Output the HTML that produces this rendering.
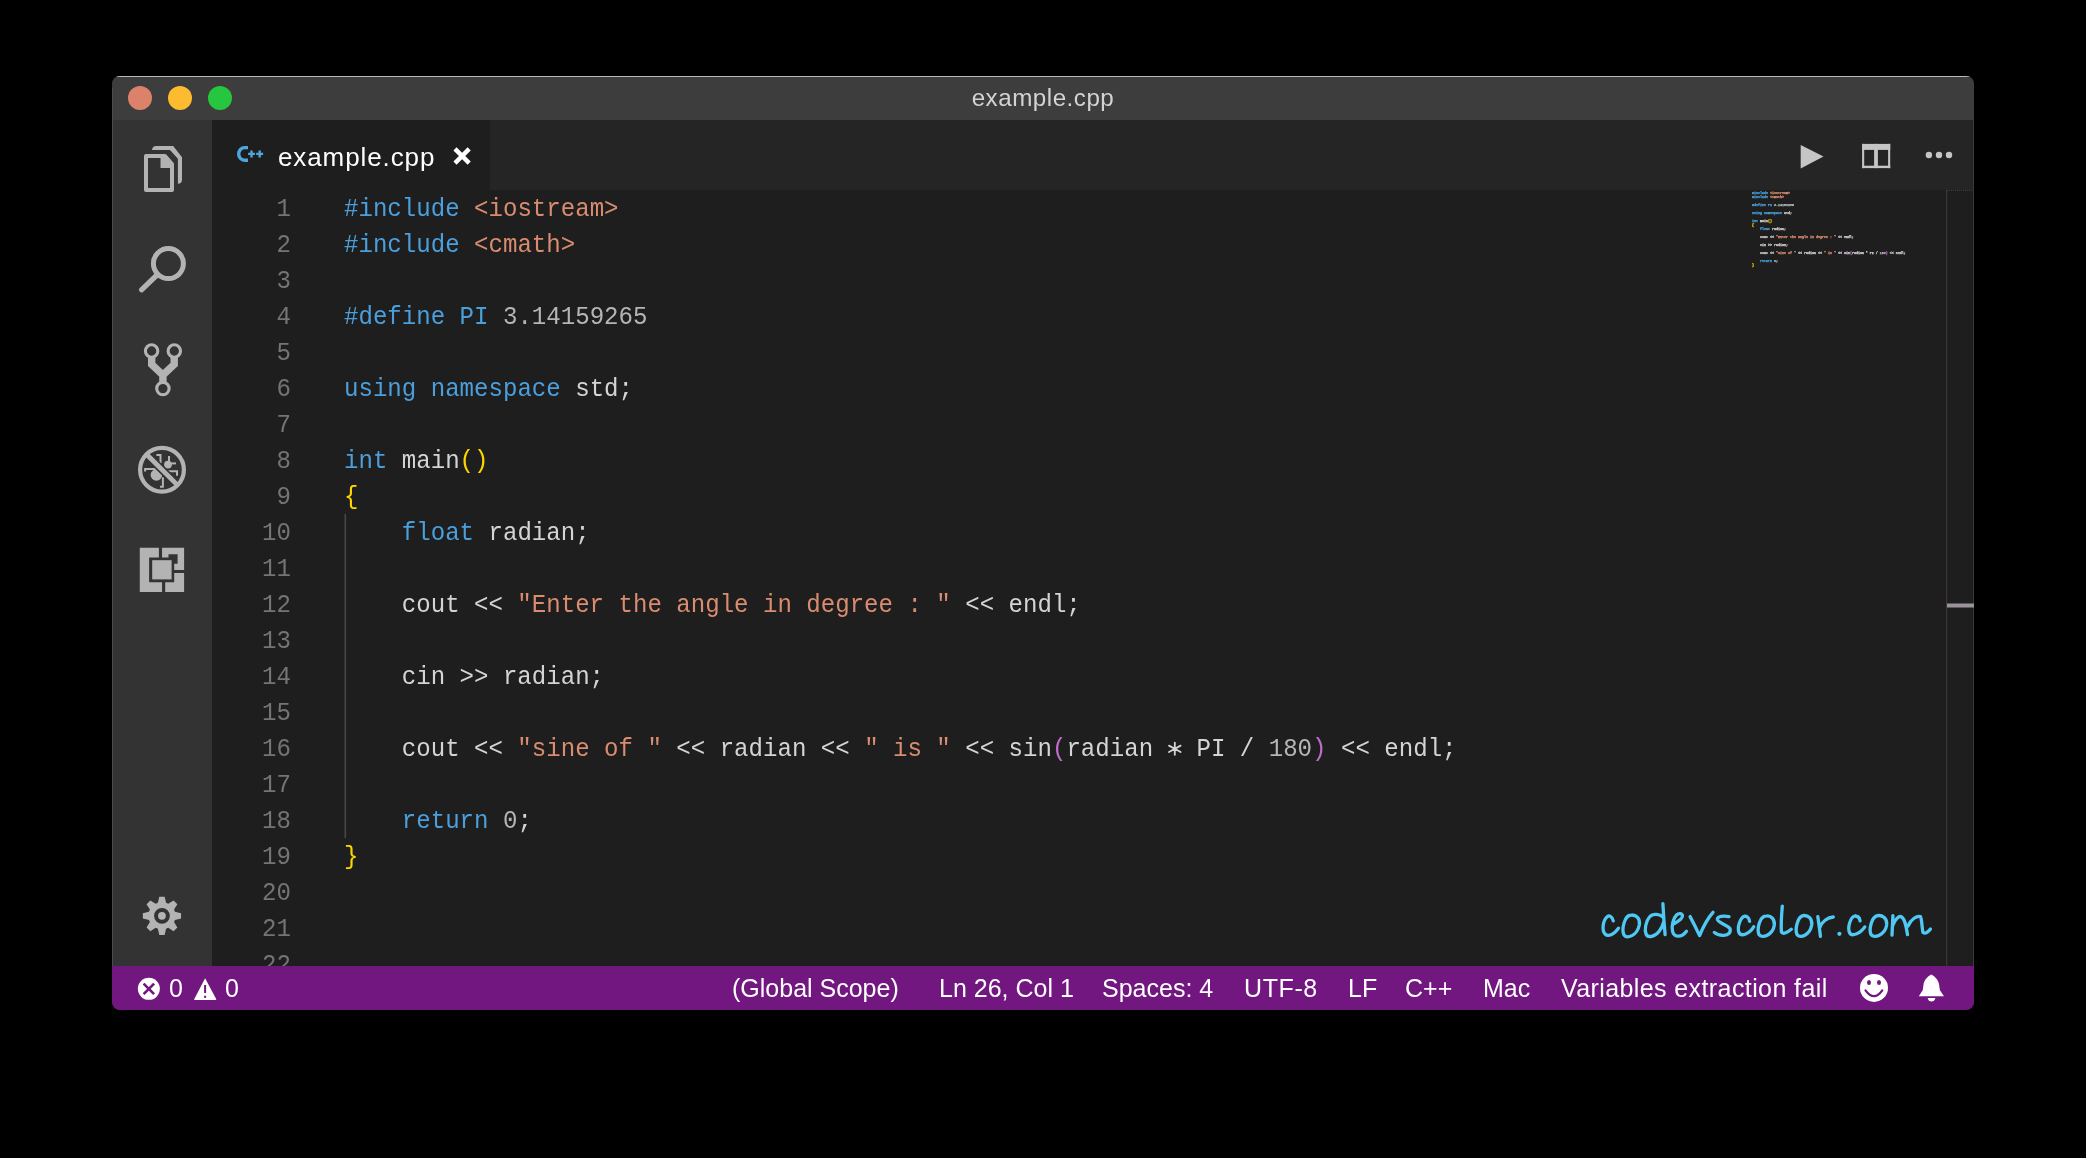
<!DOCTYPE html>
<html><head><meta charset="utf-8"><style>
html,body{margin:0;padding:0;background:#000;width:2086px;height:1158px;overflow:hidden;}
#win{position:absolute;left:112px;top:76px;width:1862px;height:934px;border-radius:8px;overflow:hidden;background:#1e1e1e;}
#title{position:absolute;left:0;top:0;width:1862px;height:44px;background:#3d3d3d;border-top:1px solid #b9b9b9;box-sizing:border-box;}
.tl{position:absolute;top:9.2px;width:24px;height:24px;border-radius:50%;margin-left:-12px;}
#ttext{position:absolute;left:0;width:1862px;top:-0.8px;text-align:center;font-family:"Liberation Sans",sans-serif;font-size:24.2px;letter-spacing:0.5px;color:#d5d2d5;line-height:44px;will-change:transform;}
#act{position:absolute;left:0;top:44px;width:100px;height:846px;background:#333333;}
#tabs{position:absolute;left:100px;top:44px;width:1762px;height:70px;background:#252526;}
#tab{position:absolute;left:0;top:0;width:278px;height:70px;background:#1e1e1e;}
#tabtext{position:absolute;left:66px;top:1.5px;font-family:"Liberation Sans",sans-serif;font-size:26px;letter-spacing:0.9px;color:#ffffff;line-height:70px;will-change:transform;}
#editor{position:absolute;left:100px;top:114px;width:1762px;height:776px;background:#1e1e1e;overflow:hidden;}
.ln{position:absolute;left:0;height:36px;will-change:transform;width:1700px;font-family:"Liberation Mono",monospace;font-size:25px;line-height:36px;white-space:pre;}
.num{position:absolute;right:1621px;top:2px;color:#747474;transform-origin:right center;transform:scaleX(0.963);}
.code{position:absolute;left:132px;top:2px;transform-origin:left center;transform:scaleX(0.963);}
#status{position:absolute;left:0;top:890px;width:1862px;height:44px;background:#721680;font-family:"Liberation Sans",sans-serif;font-size:25px;color:#ffffff;}
#status span{position:absolute;top:0;line-height:44px;white-space:pre;will-change:transform;}
#ov{position:absolute;left:0;top:0;}
</style></head><body>
<div id="win">
<div id="title"><span class="tl" style="left:28px;background:#dc826b"></span><span class="tl" style="left:68px;background:#fdbb2f"></span><span class="tl" style="left:108px;background:#27c63f"></span><div id="ttext">example.cpp</div></div>
<div id="act"></div>
<div id="tabs"><div id="tab"><div id="tabtext">example.cpp</div></div></div>
<div id="editor">
<div class="ln" style="top:0px"><span class="num">1</span><span class="code"><span style="color:#4a9fdc">#include</span><span style="color:#d4d4d4"> </span><span style="color:#d98c6f">&lt;iostream&gt;</span></span></div>
<div class="ln" style="top:36px"><span class="num">2</span><span class="code"><span style="color:#4a9fdc">#include</span><span style="color:#d4d4d4"> </span><span style="color:#d98c6f">&lt;cmath&gt;</span></span></div>
<div class="ln" style="top:72px"><span class="num">3</span><span class="code"></span></div>
<div class="ln" style="top:108px"><span class="num">4</span><span class="code"><span style="color:#4a9fdc">#define</span><span style="color:#d4d4d4"> </span><span style="color:#4a9fdc">PI</span><span style="color:#d4d4d4"> </span><span style="color:#b5b5b5">3.14159265</span></span></div>
<div class="ln" style="top:144px"><span class="num">5</span><span class="code"></span></div>
<div class="ln" style="top:180px"><span class="num">6</span><span class="code"><span style="color:#4a9fdc">using</span><span style="color:#d4d4d4"> </span><span style="color:#4a9fdc">namespace</span><span style="color:#d4d4d4"> std;</span></span></div>
<div class="ln" style="top:216px"><span class="num">7</span><span class="code"></span></div>
<div class="ln" style="top:252px"><span class="num">8</span><span class="code"><span style="color:#4a9fdc">int</span><span style="color:#d4d4d4"> main</span><span style="color:#ffd700">()</span></span></div>
<div class="ln" style="top:288px"><span class="num">9</span><span class="code"><span style="color:#ffd700">{</span></span></div>
<div class="ln" style="top:324px"><span class="num">10</span><span class="code"><span style="color:#d4d4d4">    </span><span style="color:#4a9fdc">float</span><span style="color:#d4d4d4"> radian;</span></span></div>
<div class="ln" style="top:360px"><span class="num">11</span><span class="code"></span></div>
<div class="ln" style="top:396px"><span class="num">12</span><span class="code"><span style="color:#d4d4d4">    cout &lt;&lt; </span><span style="color:#d98c6f">"Enter the angle in degree : "</span><span style="color:#d4d4d4"> &lt;&lt; endl;</span></span></div>
<div class="ln" style="top:432px"><span class="num">13</span><span class="code"></span></div>
<div class="ln" style="top:468px"><span class="num">14</span><span class="code"><span style="color:#d4d4d4">    cin &gt;&gt; radian;</span></span></div>
<div class="ln" style="top:504px"><span class="num">15</span><span class="code"></span></div>
<div class="ln" style="top:540px"><span class="num">16</span><span class="code"><span style="color:#d4d4d4">    cout &lt;&lt; </span><span style="color:#d98c6f">"sine of "</span><span style="color:#d4d4d4"> &lt;&lt; radian &lt;&lt; </span><span style="color:#d98c6f">" is "</span><span style="color:#d4d4d4"> &lt;&lt; sin</span><span style="color:#c26ccc">(</span><span style="color:#d4d4d4">radian   PI / </span><span style="color:#b5b5b5">180</span><span style="color:#c26ccc">)</span><span style="color:#d4d4d4"> &lt;&lt; endl;</span></span></div>
<div class="ln" style="top:576px"><span class="num">17</span><span class="code"></span></div>
<div class="ln" style="top:612px"><span class="num">18</span><span class="code"><span style="color:#d4d4d4">    </span><span style="color:#4a9fdc">return</span><span style="color:#d4d4d4"> </span><span style="color:#b5b5b5">0</span><span style="color:#d4d4d4">;</span></span></div>
<div class="ln" style="top:648px"><span class="num">19</span><span class="code"><span style="color:#ffd700">}</span></span></div>
<div class="ln" style="top:684px"><span class="num">20</span><span class="code"></span></div>
<div class="ln" style="top:720px"><span class="num">21</span><span class="code"></span></div>
<div class="ln" style="top:756px"><span class="num">22</span><span class="code"></span></div>
</div>
<div id="status">
<span style="left:57px">0</span><span style="left:113px">0</span>
<span style="left:620px">(Global Scope)</span>
<span style="left:827px">Ln 26, Col 1</span>
<span style="left:990px">Spaces: 4</span>
<span style="left:1132px;letter-spacing:0.6px">UTF-8</span>
<span style="left:1236px">LF</span>
<span style="left:1293px">C++</span>
<span style="left:1371px">Mac</span>
<span style="left:1449px;letter-spacing:0.4px">Variables extraction fail</span>
</div>
</div>
<svg id="ov" width="2086" height="1158" viewBox="0 0 2086 1158"><g fill="none" stroke="#b3b3b3" stroke-width="4" stroke-linejoin="miter"><path d="M146,156 H165 L172,164 V190 H146 Z" stroke-linejoin="round"/></g><path d="M160.5,156 H166 L172,163 V168.1 H160.5 Z" fill="#b3b3b3"/><path d="M152,149.9 Q152.5,146 156,146 H173.2 L182,157.2 V180 Q182,183.5 177.9,183.8 V158.8 L170,149.9 Z" fill="#b3b3b3"/><circle cx="168.4" cy="263.6" r="15" fill="none" stroke="#b3b3b3" stroke-width="5"/><line x1="157.5" y1="274.5" x2="141.5" y2="289.8" stroke="#b3b3b3" stroke-width="5.2" stroke-linecap="round"/><g fill="none" stroke="#b3b3b3" stroke-width="3.1"><circle cx="151.6" cy="351" r="6.2"/><circle cx="174.3" cy="351" r="6.2"/><circle cx="162.9" cy="388.6" r="6.2"/></g><path d="M151.7,356 V364.5 L162.9,375 V383 M174.2,356 V364.5 L162.9,375" fill="none" stroke="#b3b3b3" stroke-width="7.4" stroke-linejoin="miter"/><g fill="#b3b3b3"><circle cx="168" cy="464.6" r="3.9"/><circle cx="156.4" cy="475" r="5.8"/></g><g fill="none" stroke="#b3b3b3" stroke-width="2"><path d="M156.4,455 H160.5 V463"/><path d="M169,456 V462"/><path d="M169,463.4 H176"/><path d="M168.3,471.3 H177 V475.8"/><path d="M156.4,469.1 H145.1 V471.6"/><path d="M162.9,477.3 V486.7 H160"/></g><line x1="147.5" y1="455.3" x2="177" y2="484.6" stroke="#333333" stroke-width="8"/><circle cx="162" cy="469.8" r="21.9" fill="none" stroke="#b3b3b3" stroke-width="4.2"/><line x1="147.5" y1="455.3" x2="177" y2="484.6" stroke="#b3b3b3" stroke-width="4.8"/><g fill="#b3b3b3"><polygon points="139.8,547.8 158.9,547.8 158.9,557.6 149.1,557.6 149.1,582.2 162.05,582.2 162.05,592.1 139.8,592.1"/><polygon points="162.05,547.8 184.1,547.8 184.1,570.05 174.2,570.05 174.2,563.8 177.6,563.8 177.6,554.25 168.5,554.25 168.5,557.6 162.05,557.6"/><polygon points="174.2,572.9 184.1,572.9 184.1,592.1 165.2,592.1 165.2,582.2 174.2,582.2"/><rect x="152.2" y="560.2" width="19.4" height="19.2"/></g><polygon points="157.86,902.83 159.29,896.69 164.63,896.69 166.06,902.83 168.23,903.73 173.58,900.39 177.37,904.18 174.03,909.53 174.93,911.70 181.07,913.13 181.07,918.47 174.93,919.90 174.03,922.07 177.37,927.42 173.58,931.21 168.23,927.87 166.06,928.77 164.63,934.91 159.29,934.91 157.86,928.77 155.69,927.87 150.34,931.21 146.55,927.42 149.89,922.07 148.99,919.90 142.85,918.47 142.85,913.13 148.99,911.70 149.89,909.53 146.55,904.18 150.34,900.39 155.69,903.73" fill="#b3b3b3"/><circle cx="161.96" cy="915.8" r="5.9" fill="none" stroke="#333333" stroke-width="4"/><path d="M248,145.9 H244.6 A7.6,8 0 0 0 244.6,161.9 H248 V158.5 H244.6 A4.2,4.6 0 0 1 244.6,149.3 H248 Z" fill="#4ea6dc"/><g stroke="#4ea6dc" stroke-width="2.4"><path d="M248.1,153.9 H254.9 M251.5,150.6 V157.4 M256.2,153.9 H263.1 M259.7,150.6 V157.4"/></g><path d="M455,148.9 L469.2,163.1 M469.2,148.9 L455,163.1" stroke="#ffffff" stroke-width="4.4"/><polygon points="1800.7,145 1823.5,156.6 1800.7,168.5" fill="#c5c5c5"/><g fill="#c5c5c5"><rect x="1862.1" y="143.9" width="28.1" height="6"/><rect x="1862.1" y="143.9" width="2.1" height="24.2"/><rect x="1888.1" y="143.9" width="2.1" height="24.2"/><rect x="1862.1" y="165.7" width="28.1" height="2.4"/><rect x="1874.1" y="143.9" width="3.8" height="24.2"/></g><g fill="#c5c5c5"><circle cx="1928.9" cy="155" r="3.2"/><circle cx="1939" cy="155" r="3.2"/><circle cx="1949" cy="155" r="3.2"/></g><g stroke="#d4d4d4" stroke-width="1.8" stroke-linecap="round"><path d="M1174.8,742.6 V754.8 M1169,745.6 L1180.6,752 M1169,752 L1180.6,745.6"/></g><rect x="344.5" y="514" width="1.6" height="324" fill="#464646"/><rect x="1946" y="190" width="1.2" height="776" fill="#3b3834"/><line x1="1947" y1="190.5" x2="1973" y2="190.5" stroke="#3c3c3c" stroke-width="1" stroke-dasharray="1,1"/><rect x="1973" y="120" width="1" height="846" fill="#3a3a3a"/><rect x="112" y="88" width="1" height="878" fill="#474d52"/><rect x="1947" y="603.5" width="27" height="4" fill="#9b929b"/><g font-family="Liberation Mono" font-size="3.34" style="white-space:pre"><text x="1752" y="193.7" xml:space="preserve" font-weight="bold" stroke-width="0.25"><tspan fill="#4a9fdc" stroke="#4a9fdc">#include</tspan><tspan fill="#d4d4d4" stroke="#d4d4d4"> </tspan><tspan fill="#d98c6f" stroke="#d98c6f">&lt;iostream&gt;</tspan></text><text x="1752" y="197.7" xml:space="preserve" font-weight="bold" stroke-width="0.25"><tspan fill="#4a9fdc" stroke="#4a9fdc">#include</tspan><tspan fill="#d4d4d4" stroke="#d4d4d4"> </tspan><tspan fill="#d98c6f" stroke="#d98c6f">&lt;cmath&gt;</tspan></text><text x="1752" y="205.7" xml:space="preserve" font-weight="bold" stroke-width="0.25"><tspan fill="#4a9fdc" stroke="#4a9fdc">#define</tspan><tspan fill="#d4d4d4" stroke="#d4d4d4"> </tspan><tspan fill="#4a9fdc" stroke="#4a9fdc">PI</tspan><tspan fill="#d4d4d4" stroke="#d4d4d4"> </tspan><tspan fill="#b5b5b5" stroke="#b5b5b5">3.14159265</tspan></text><text x="1752" y="213.7" xml:space="preserve" font-weight="bold" stroke-width="0.25"><tspan fill="#4a9fdc" stroke="#4a9fdc">using</tspan><tspan fill="#d4d4d4" stroke="#d4d4d4"> </tspan><tspan fill="#4a9fdc" stroke="#4a9fdc">namespace</tspan><tspan fill="#d4d4d4" stroke="#d4d4d4"> std;</tspan></text><text x="1752" y="221.7" xml:space="preserve" font-weight="bold" stroke-width="0.25"><tspan fill="#4a9fdc" stroke="#4a9fdc">int</tspan><tspan fill="#d4d4d4" stroke="#d4d4d4"> main</tspan><tspan fill="#ffd700" stroke="#ffd700">()</tspan></text><text x="1752" y="225.7" xml:space="preserve" font-weight="bold" stroke-width="0.25"><tspan fill="#ffd700" stroke="#ffd700">{</tspan></text><text x="1752" y="229.7" xml:space="preserve" font-weight="bold" stroke-width="0.25"><tspan fill="#d4d4d4" stroke="#d4d4d4">    </tspan><tspan fill="#4a9fdc" stroke="#4a9fdc">float</tspan><tspan fill="#d4d4d4" stroke="#d4d4d4"> radian;</tspan></text><text x="1752" y="237.7" xml:space="preserve" font-weight="bold" stroke-width="0.25"><tspan fill="#d4d4d4" stroke="#d4d4d4">    cout &lt;&lt; </tspan><tspan fill="#d98c6f" stroke="#d98c6f">"Enter the angle in degree : "</tspan><tspan fill="#d4d4d4" stroke="#d4d4d4"> &lt;&lt; endl;</tspan></text><text x="1752" y="245.7" xml:space="preserve" font-weight="bold" stroke-width="0.25"><tspan fill="#d4d4d4" stroke="#d4d4d4">    cin &gt;&gt; radian;</tspan></text><text x="1752" y="253.7" xml:space="preserve" font-weight="bold" stroke-width="0.25"><tspan fill="#d4d4d4" stroke="#d4d4d4">    cout &lt;&lt; </tspan><tspan fill="#d98c6f" stroke="#d98c6f">"sine of "</tspan><tspan fill="#d4d4d4" stroke="#d4d4d4"> &lt;&lt; radian &lt;&lt; </tspan><tspan fill="#d98c6f" stroke="#d98c6f">" is "</tspan><tspan fill="#d4d4d4" stroke="#d4d4d4"> &lt;&lt; sin</tspan><tspan fill="#c26ccc" stroke="#c26ccc">(</tspan><tspan fill="#d4d4d4" stroke="#d4d4d4">radian * PI / </tspan><tspan fill="#b5b5b5" stroke="#b5b5b5">180</tspan><tspan fill="#c26ccc" stroke="#c26ccc">)</tspan><tspan fill="#d4d4d4" stroke="#d4d4d4"> &lt;&lt; endl;</tspan></text><text x="1752" y="261.7" xml:space="preserve" font-weight="bold" stroke-width="0.25"><tspan fill="#d4d4d4" stroke="#d4d4d4">    </tspan><tspan fill="#4a9fdc" stroke="#4a9fdc">return</tspan><tspan fill="#d4d4d4" stroke="#d4d4d4"> </tspan><tspan fill="#b5b5b5" stroke="#b5b5b5">0</tspan><tspan fill="#d4d4d4" stroke="#d4d4d4">;</tspan></text><text x="1752" y="265.7" xml:space="preserve" font-weight="bold" stroke-width="0.25"><tspan fill="#ffd700" stroke="#ffd700">}</tspan></text></g><g fill="none" stroke="#4fc8f4" stroke-width="3.3" stroke-linecap="round" stroke-linejoin="round"><path d="M1613.3,920.9 C1612,916 1609,915.3 1607.5,916.5 C1603,920 1601.5,930 1605,934 C1608,937 1614,935 1618.5,928.2"/><path d="M1631.5,915 C1624,915 1621.5,930 1624,935 C1627,939 1637,936 1639.3,925 C1640.5,918 1636,914.8 1631.5,915 Z"/><path d="M1663.5,917.5 C1660,914 1653,913 1649.5,917 C1645.5,921.5 1644.5,930 1646,934 C1648,938.5 1655,936.5 1659,931.5 C1661.5,928.5 1663,925 1664,921 M1662.9,903.6 C1663.5,915 1664.2,925 1665.1,934.7"/><path d="M1674.5,923.5 C1678,921.5 1683,918.5 1682.5,915.5 C1682,913 1678.5,913 1676.5,915 C1673,918.5 1671.5,926 1672.5,931 C1673.5,937 1681,938.5 1686.5,931.2"/><path d="M1690.1,916.6 C1693,922 1697,930 1699.6,935.6 C1703,927 1708,918 1713,912.3"/><path d="M1729,916.6 C1724,915.5 1717,916 1717.4,919.5 C1718,923 1728,925 1730.1,928.8 C1731,933 1728,935 1724,935.3 C1720,935.5 1716,934 1714.3,932.4"/><path d="M1749.6,921.4 C1749,917 1746,916 1744.9,916.1 C1740,917 1737,928 1739,932.5 C1741,937 1750,934 1753.8,926.6"/><path d="M1766.5,915.8 C1759,916 1757,930 1759,934.5 C1762,939 1773,935 1774.3,925 C1775,918 1770,915.6 1766.5,915.8 Z"/><path d="M1782.3,906.1 C1781.5,915 1781,925 1781.4,932 C1783,935 1788,932 1791.3,929.3"/><path d="M1804,915.5 C1797,916 1795,930 1797,934.5 C1800,939 1810,935 1811.7,925 C1812.5,918 1808,915.3 1804,915.5 Z"/><path d="M1817.8,916.6 C1819,925 1820,932 1820.4,936.4 M1819.6,928 C1822,921 1828,917.5 1833.3,917"/><path d="M1855,916 C1850,917 1847.5,928 1849.5,932.5 C1851.5,937 1860,934 1864.8,926.9 M1860.1,920.9 C1859.5,917 1857,916 1855,916"/><path d="M1878.5,915.5 C1871,916 1869,930 1871,934.5 C1874,939 1885,935 1886.7,925 C1887.5,918 1882,915.3 1878.5,915.5 Z"/><path d="M1892.9,915.7 C1892.5,925 1892.2,930 1892,935.1 M1892.6,926 C1895,919 1899,916 1901,916.6 C1905,918 1906.5,928 1907.5,934.7 M1908,926 C1911,919 1917,915.5 1920.5,916.6 C1922,920 1922,929 1923,932.5 C1925,934 1928,932 1930.4,929.1"/><circle cx="1839.4" cy="933.8" r="2.1" fill="#4fc8f4" stroke="none"/></g><circle cx="148.85" cy="988.85" r="11" fill="#ffffff"/><path d="M143.6,983.6 L154.1,994.1 M154.1,983.6 L143.6,994.1" stroke="#721680" stroke-width="2.6"/><path d="M205.1,978.3 L216.3,999.2 Q216.3,999.9 215.5,999.9 H194.7 Q193.9,999.9 194.2,999.2 Z" fill="#ffffff"/><rect x="204.1" y="985" width="2" height="8" fill="#721680"/><rect x="204.1" y="995.8" width="2" height="2.1" fill="#721680"/><circle cx="1874" cy="987.9" r="14" fill="#ffffff"/><g fill="#721680"><ellipse cx="1869" cy="982.4" rx="2" ry="2.5"/><ellipse cx="1879" cy="982.4" rx="2" ry="2.5"/></g><path d="M1865.5,990.3 Q1874,1002 1882.3,990.3" fill="none" stroke="#721680" stroke-width="2.2" stroke-linecap="round"/><path d="M1931.3,974.4 C1928,976.3 1924.6,979 1923.6,984 L1922.7,990.3 L1918.8,996.2 H1944 L1939.9,990.3 L1939,984 C1938,979 1934.6,976.3 1931.3,974.4 Z" fill="#ffffff"/><path d="M1927.6,998 H1935.4 Q1934.5,1001.5 1931.5,1001.5 Q1928.5,1001.5 1927.6,998 Z" fill="#ffffff"/></svg>
</body></html>
